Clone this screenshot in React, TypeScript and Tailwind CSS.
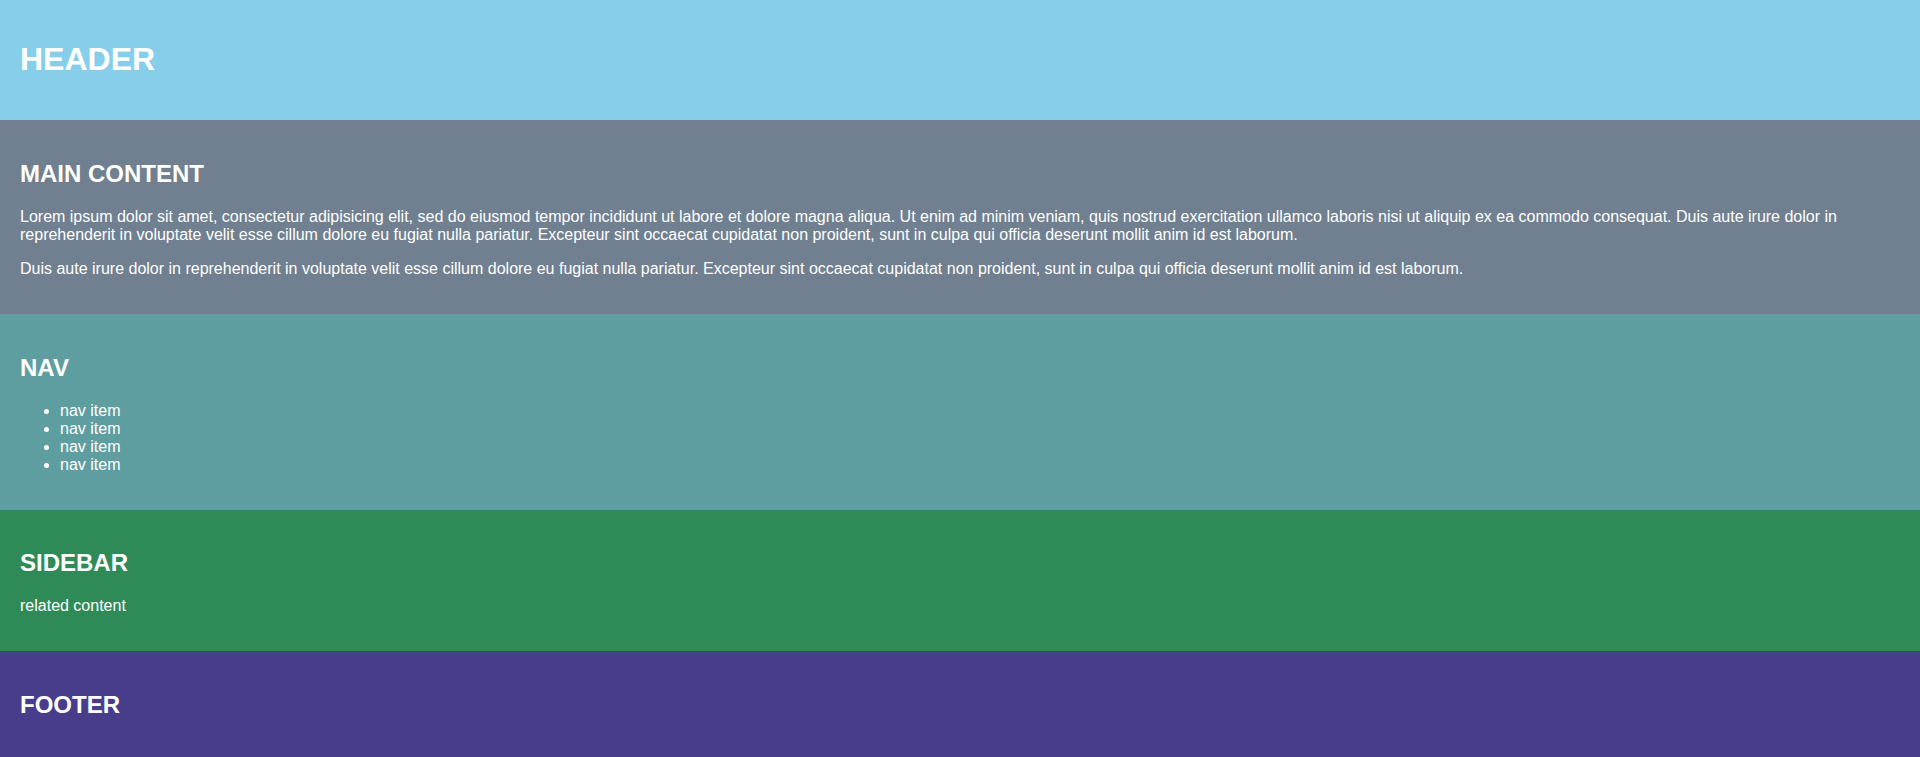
import React from "react";

const font = { fontFamily: '"Liberation Sans", Arial, sans-serif' };

export default function App() {
  return (
    <div className="text-white font-['Liberation_Sans',Arial,sans-serif]" style={font}>
      <header className="bg-[#87CEEB] p-5">
        <h1 className="text-[32px] font-bold leading-[normal] my-[21.44px]">HEADER</h1>
      </header>
      <main className="bg-[#708090] p-5">
        <h2 className="text-[24px] font-bold leading-[normal] my-[19.92px]">MAIN CONTENT</h2>
        <p className="text-base leading-[normal] my-4">
          Lorem ipsum dolor sit amet, consectetur adipisicing elit, sed do eiusmod tempor incididunt ut labore et dolore magna aliqua. Ut enim ad minim veniam, quis nostrud exercitation ullamco laboris nisi ut aliquip ex ea commodo consequat. Duis aute irure dolor in reprehenderit in voluptate velit esse cillum dolore eu fugiat nulla pariatur. Excepteur sint occaecat cupidatat non proident, sunt in culpa qui officia deserunt mollit anim id est laborum.
        </p>
        <p className="text-base leading-[normal] my-4">
          Duis aute irure dolor in reprehenderit in voluptate velit esse cillum dolore eu fugiat nulla pariatur. Excepteur sint occaecat cupidatat non proident, sunt in culpa qui officia deserunt mollit anim id est laborum.
        </p>
      </main>
      <nav className="bg-[#5F9EA0] p-5">
        <h2 className="text-[24px] font-bold leading-[normal] my-[19.92px]">NAV</h2>
        <ul className="list-disc pl-10 my-4 text-base leading-[normal]">
          <li>nav item</li>
          <li>nav item</li>
          <li>nav item</li>
          <li>nav item</li>
        </ul>
      </nav>
      <aside className="bg-[#2E8B57] p-5">
        <h2 className="text-[24px] font-bold leading-[normal] my-[19.92px]">SIDEBAR</h2>
        <p className="text-base leading-[normal] my-4">related content</p>
      </aside>
      <footer className="bg-[#483D8B] p-5">
        <h2 className="text-[24px] font-bold leading-[normal] my-[19.92px]">FOOTER</h2>
      </footer>
    </div>
  );
}
